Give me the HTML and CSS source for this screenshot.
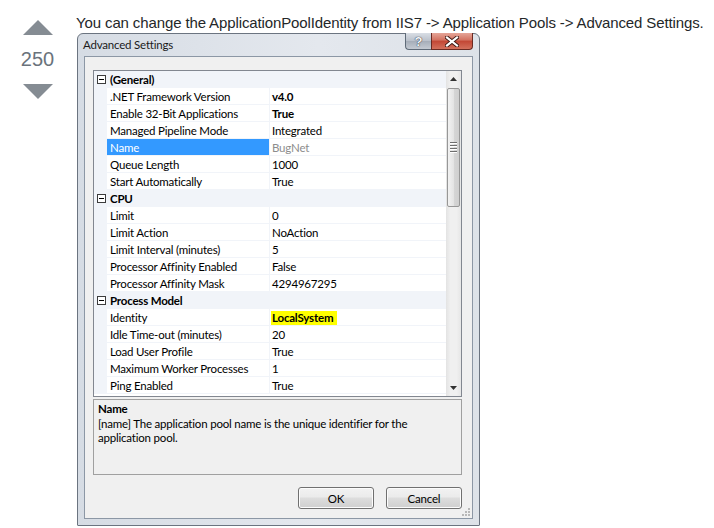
FILE: index.html
```html
<!DOCTYPE html>
<html>
<head>
<meta charset="utf-8">
<link rel="stylesheet" href="styles.css">
</head>
<body>
<div class="post">
  <div class="votecell">
    <svg class="arrow" width="30" height="15" viewBox="0 0 30 15"><path d="M0 15 L15 0 L30 15 Z" fill="#858c93"/></svg>
    <div class="count">250</div>
    <svg class="arrow" width="30" height="15" viewBox="0 0 30 15"><path d="M0 0 L30 0 L15 15 Z" fill="#858c93"/></svg>
  </div>
  <div class="postcell">
    <p class="text">You can change the ApplicationPoolIdentity from IIS7 -&gt; Application Pools -&gt; Advanced Settings.</p>
    <div class="dlg">
      <div class="titlebar">
        <span class="title">Advanced Settings</span>
        <div class="capbtns">
          <span class="capbtn help-btn">?</span>
          <span class="capbtn close-btn"><svg width="14" height="11" viewBox="0 0 14 11"><path d="M2 1.5 L12 9.5 M12 1.5 L2 9.5" stroke="#3b1712" stroke-width="4" stroke-linecap="square"/><path d="M2 1.5 L12 9.5 M12 1.5 L2 9.5" stroke="#fff" stroke-width="2.2" stroke-linecap="square"/></svg></span>
        </div>
      </div>
      <div class="client">
        <div class="grid">
          <div class="rows">
            <div class="row cat"><span class="m"><i class="box"></i></span><span class="n">(General)</span></div>
            <div class="row"><span class="m"></span><span class="n">.NET Framework Version</span><span class="v b">v4.0</span></div>
            <div class="row"><span class="m"></span><span class="n">Enable 32-Bit Applications</span><span class="v b">True</span></div>
            <div class="row"><span class="m"></span><span class="n">Managed Pipeline Mode</span><span class="v">Integrated</span></div>
            <div class="row"><span class="m"></span><span class="n sel">Name</span><span class="v ro">BugNet</span></div>
            <div class="row"><span class="m"></span><span class="n">Queue Length</span><span class="v">1000</span></div>
            <div class="row"><span class="m"></span><span class="n">Start Automatically</span><span class="v">True</span></div>
            <div class="row cat"><span class="m"><i class="box"></i></span><span class="n">CPU</span></div>
            <div class="row"><span class="m"></span><span class="n">Limit</span><span class="v">0</span></div>
            <div class="row"><span class="m"></span><span class="n">Limit Action</span><span class="v">NoAction</span></div>
            <div class="row"><span class="m"></span><span class="n">Limit Interval (minutes)</span><span class="v">5</span></div>
            <div class="row"><span class="m"></span><span class="n">Processor Affinity Enabled</span><span class="v">False</span></div>
            <div class="row"><span class="m"></span><span class="n">Processor Affinity Mask</span><span class="v">4294967295</span></div>
            <div class="row cat"><span class="m"><i class="box"></i></span><span class="n">Process Model</span></div>
            <div class="row"><span class="m"></span><span class="n">Identity</span><span class="v b"><mark class="hl">LocalSystem</mark></span></div>
            <div class="row"><span class="m"></span><span class="n">Idle Time-out (minutes)</span><span class="v">20</span></div>
            <div class="row"><span class="m"></span><span class="n">Load User Profile</span><span class="v">True</span></div>
            <div class="row"><span class="m"></span><span class="n">Maximum Worker Processes</span><span class="v">1</span></div>
            <div class="row"><span class="m"></span><span class="n">Ping Enabled</span><span class="v">True</span></div>
          </div>
          <div class="sbar">
            <div class="sarrow"><svg width="7" height="4" viewBox="0 0 7 4"><path d="M0 4 L3.5 0 L7 4 Z" fill="#333"/></svg></div>
            <div class="thumb"><i></i><i></i><i></i><i></i></div>
            <div class="strack"></div>
            <div class="sarrow"><svg width="7" height="4" viewBox="0 0 7 4"><path d="M0 0 L7 0 L3.5 4 Z" fill="#333"/></svg></div>
          </div>
        </div>
        <div class="helppane">
          <div class="htitle">Name</div>
          <div class="hdesc">[name] The application pool name is the unique identifier for the<br>application pool.</div>
        </div>
        <div class="buttons">
          <span class="btn">OK</span>
          <span class="btn">Cancel</span>
        </div>
        <svg class="grip" width="8" height="8" viewBox="0 0 8 8"><g fill="#b8b8b8"><rect x="6" y="0" width="2" height="2"/><rect x="3" y="3" width="2" height="2"/><rect x="6" y="3" width="2" height="2"/><rect x="0" y="6" width="2" height="2"/><rect x="3" y="6" width="2" height="2"/><rect x="6" y="6" width="2" height="2"/></g></svg>
      </div>
    </div>
  </div>
</div>
</body>
</html>
```

FILE: styles.css
```css
html, body {
  margin: 0;
  padding: 0;
  background: #fff;
}
body {
  font-family: "Liberation Sans", Arial, sans-serif;
}
.post {
  display: flex;
}
.votecell {
  width: 75px;
  display: flex;
  flex-direction: column;
  align-items: center;
  padding-top: 20px;
}
.arrow {
  display: block;
}
.count {
  font-size: 20px;
  line-height: 24px;
  color: #6a737c;
  margin: 12px 0 13px;
}
.postcell {
  padding-left: 1px;
}
.text {
  margin: 0;
  padding-top: 13px;
  font-size: 15px;
  letter-spacing: -0.12px;
  line-height: 20px;
  color: #242729;
  white-space: nowrap;
}
.dlg {
  margin-left: 1px;
  width: 403px;
  box-sizing: border-box;
  border: 1px solid #6b7480;
  border-radius: 6px 6px 1px 1px;
  background: linear-gradient(to right, #d6dce4, #e4e8ee 60%, #dde2e8);
  padding: 0 6px 6px 6px;
  font-family: "Lato", "Noto Sans", sans-serif;
  font-size: 11.5px;
  letter-spacing: -0.2px;
  color: #000;
}
.titlebar {
  height: 22px;
  display: flex;
  align-items: flex-start;
  justify-content: space-between;
}
.title {
  margin-left: -1px;
  line-height: 22px;
  color: #1a1a1a;
}
.capbtns {
  display: flex;
  margin-top: -1px;
}
.capbtn {
  height: 17px;
  box-sizing: border-box;
  display: flex;
  align-items: center;
  justify-content: center;
  border: 1px solid #5f6b78;
  border-top: none;
}
.help-btn {
  width: 26px;
  border-radius: 0 0 0 4px;
  border-right: none;
  background: linear-gradient(#d9dee5, #b9c0ca 50%, #a5adb8 51%, #c4cad2);
  color: #f4f6f8;
  font-family: "Liberation Sans", sans-serif;
  font-weight: bold;
  font-size: 13px;
  letter-spacing: 0;
  text-shadow: 0 0 1px #2e3640, 0 0 1px #2e3640;
}
.close-btn {
  width: 42px;
  border-radius: 0 0 4px 0;
  border-color: #6a2a22;
  background: linear-gradient(#e5a598, #d2705f 45%, #c24634 50%, #d3705c);
}
.close-btn svg {
  display: block;
}
.client {
  position: relative;
  border: 1px solid #8c97a5;
  background: #f0f0f0;
  padding: 13px 10px 9px 8px;
}
.grid {
  display: flex;
  border: 1px solid #828790;
  height: 325px;
  overflow: hidden;
  background: #fff;
}
.rows {
  width: 352px;
  background: #fff;
}
.row {
  display: grid;
  grid-template-columns: 13px 163px 176px;
  height: 17px;
}
.row span {
  box-sizing: border-box;
  padding-top: 2px;
  line-height: 14px;
  white-space: nowrap;
  overflow: hidden;
}
.row span.m {
  padding-top: 0;
  background: #f1f4f9;
  display: flex;
  align-items: center;
  justify-content: center;
}
.n {
  padding-left: 3px;
  border-right: 1px solid #f1f4f9;
  border-bottom: 1px solid #f1f4f9;
}
.v {
  padding-left: 2px;
  border-bottom: 1px solid #f1f4f9;
}
.b {
  font-weight: bold;
}
.ro {
  color: #8d8d8d;
}
.sel {
  background: #3399ff;
  color: #fff;
}
.cat .n {
  grid-column: 2 / 4;
  background: #f1f4f9;
  font-weight: bold;
  border: none;
}
.box {
  display: block;
  position: relative;
  width: 9px;
  height: 9px;
  box-sizing: border-box;
  border: 1px solid #3c3c3c;
  background: #fff;
  margin-left: 2px;
}
.box::after {
  content: "";
  position: absolute;
  left: 1px;
  top: 3px;
  width: 5px;
  height: 1px;
  background: #000;
}
.hl {
  background: #ffff00;
  color: #000;
  display: inline-block;
  line-height: 14px;
  padding: 0 4px 0 1px;
  margin-left: -1px;
}
.sbar {
  width: 16px;
  display: flex;
  flex-direction: column;
  background: linear-gradient(to right, #e3e3e3, #f0f0f0 30%, #f0f0f0 70%, #e6e6e6);
}
.sarrow {
  height: 16px;
  display: flex;
  align-items: center;
  justify-content: center;
}
.thumb {
  height: 119px;
  margin: 1px 1px 0 1px;
  box-sizing: border-box;
  border: 1px solid #979797;
  border-radius: 2px;
  background: linear-gradient(to right, #f2f2f2, #e4e4e4 50%, #d6d6d6 51%, #cfcfcf);
  display: flex;
  flex-direction: column;
  align-items: center;
  justify-content: center;
  gap: 1px;
}
.thumb i {
  display: block;
  width: 7px;
  height: 1px;
  background: #6e6e6e;
  border-bottom: 1px solid #fff;
}
.strack {
  flex: 1;
}
.helppane {
  margin-top: 2px;
  height: 76px;
  box-sizing: border-box;
  border: 1px solid #a0a0a0;
  background: #f0f0f0;
  padding: 2px 4px;
  line-height: 14px;
}
.htitle {
  font-weight: bold;
  margin-bottom: 1px;
}
.buttons {
  display: flex;
  justify-content: flex-end;
  gap: 12px;
  margin-top: 12px;
}
.btn {
  width: 76px;
  height: 22px;
  box-sizing: border-box;
  border: 1px solid #707070;
  border-radius: 3px;
  background: linear-gradient(#f2f2f2, #ebebeb 45%, #dddddd 50%, #cfcfcf);
  box-shadow: inset 0 0 0 1px #fcfcfc;
  display: flex;
  align-items: center;
  justify-content: center;
}
.grip {
  position: absolute;
  right: 2px;
  bottom: 2px;
}
```
